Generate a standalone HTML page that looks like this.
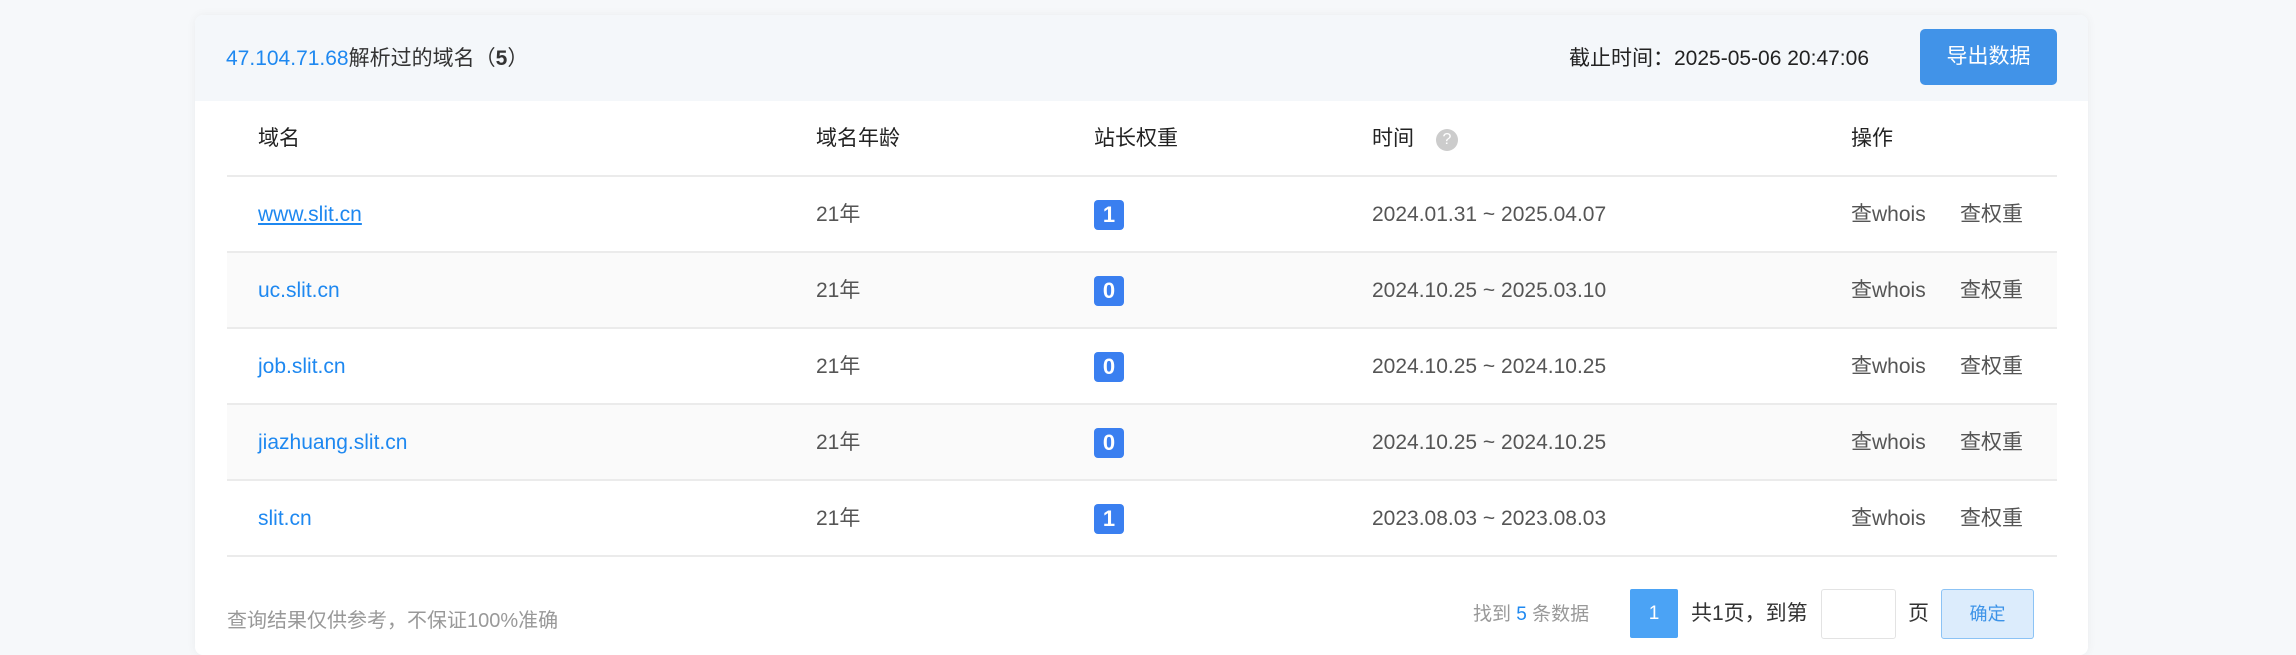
<!DOCTYPE html>
<html><head><meta charset="utf-8"><style>
*{box-sizing:border-box;margin:0;padding:0}
body{width:2296px;height:641px;background:#f6f8fa;font-family:"Liberation Sans","Noto Sans CJK SC",sans-serif;overflow:hidden;position:relative;color:#333}
.card{position:absolute;left:195px;top:15px;width:1893px;height:640px;background:#fff;border-radius:8px;box-shadow:0 0 10px rgba(0,0,0,.05)}
.hd{position:absolute;left:0;top:0;width:100%;height:86px;background:#f4f7fa;border-radius:8px 8px 0 0}
.a{position:absolute;white-space:nowrap;font-size:21px;line-height:30px}
.blue{color:#1e88f0}
.btn{position:absolute;left:1725px;top:14px;width:137px;height:56px;background:#4193e8;color:#fff;border-radius:5px;font-size:21px;line-height:56px;text-align:center}
.row{position:absolute;left:32px;width:1830px;height:76px;border-bottom:2px solid #ebebeb}
.row.s{background:#fafafa}
.c{position:absolute;top:23px;font-size:21px;line-height:30px;white-space:nowrap;color:#555}
.c.blue{color:#1e88f0}
.b{position:absolute;left:867px;top:23px;width:30px;height:30px;background:#3a7ff0;color:#fff;border-radius:4px;font-weight:bold;font-size:22px;line-height:30px;text-align:center}
.q{display:inline-block;width:22px;height:22px;border-radius:50%;background:#ccc;color:#fff;font-size:16px;line-height:22px;text-align:center;margin-left:22px;vertical-align:1px}
</style></head><body>
<div class="card">
<div class="hd"></div>
<div class="a" style="left:31px;top:29px"><span class="blue">47.104.71.68</span>解析过的域名（<b>5</b>）</div>
<div class="a" style="left:1374px;top:29px;color:#222">截止时间：2025-05-06 20:47:06</div>
<div class="btn">导出数据</div>

<div class="row" style="top:86px;height:76px"><div class="c" style="left:31px;color:#222">域名</div><div class="c" style="left:589px;color:#222">域名年龄</div><div class="c" style="left:867px;color:#222">站长权重</div><div class="c" style="left:1145px;color:#222">时间<span class="q">?</span></div><div class="c" style="left:1624px;color:#222">操作</div></div>

<div class="row" style="top:162px"><div class="c blue" style="left:31px;text-decoration:underline">www.slit.cn</div><div class="c" style="left:589px">21年</div><div class="b">1</div><div class="c" style="left:1145px">2024.01.31 ~ 2025.04.07</div><div class="c" style="left:1624px">查whois</div><div class="c" style="left:1733px">查权重</div></div>
<div class="row s" style="top:238px"><div class="c blue" style="left:31px">uc.slit.cn</div><div class="c" style="left:589px">21年</div><div class="b">0</div><div class="c" style="left:1145px">2024.10.25 ~ 2025.03.10</div><div class="c" style="left:1624px">查whois</div><div class="c" style="left:1733px">查权重</div></div>
<div class="row" style="top:314px"><div class="c blue" style="left:31px">job.slit.cn</div><div class="c" style="left:589px">21年</div><div class="b">0</div><div class="c" style="left:1145px">2024.10.25 ~ 2024.10.25</div><div class="c" style="left:1624px">查whois</div><div class="c" style="left:1733px">查权重</div></div>
<div class="row s" style="top:390px"><div class="c blue" style="left:31px">jiazhuang.slit.cn</div><div class="c" style="left:589px">21年</div><div class="b">0</div><div class="c" style="left:1145px">2024.10.25 ~ 2024.10.25</div><div class="c" style="left:1624px">查whois</div><div class="c" style="left:1733px">查权重</div></div>
<div class="row" style="top:466px"><div class="c blue" style="left:31px">slit.cn</div><div class="c" style="left:589px">21年</div><div class="b">1</div><div class="c" style="left:1145px">2023.08.03 ~ 2023.08.03</div><div class="c" style="left:1624px">查whois</div><div class="c" style="left:1733px">查权重</div></div>

<div class="a" style="left:32px;top:591px;color:#999;font-size:20px">查询结果仅供参考，不保证100%准确</div>
<div class="a" style="left:1278px;top:585px;color:#999;font-size:19px">找到 <span class="blue">5</span> 条数据</div>
<div style="position:absolute;left:1435px;top:574px;width:48px;height:49px;background:#4ba3f5;color:#fff;font-size:19px;line-height:49px;text-align:center;border-radius:2px">1</div>
<div class="a" style="left:1496px;top:584px;color:#333;font-size:21px">共1页，到第</div>
<div style="position:absolute;left:1626px;top:574px;width:75px;height:50px;border:1px solid #e3e3e3;border-radius:3px;background:#fff"></div>
<div class="a" style="left:1713px;top:584px;color:#333">页</div>
<div style="position:absolute;left:1746px;top:574px;width:93px;height:50px;border:1px solid #8cc3f5;background:#dcecfc;color:#3d93e8;font-size:18px;line-height:48px;text-align:center;border-radius:3px">确定</div>
</div>
</body></html>
